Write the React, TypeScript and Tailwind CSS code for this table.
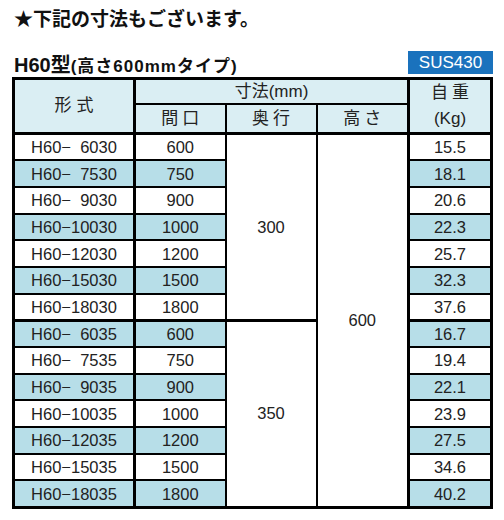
const FONT = '"Liberation Sans", "Noto Sans CJK JP", sans-serif';

type Row = { model: string; width: string; weight: string };

const ROWS: Row[] = [
  { model: 'H60−\u20076030', width: '600', weight: '15.5' },
  { model: 'H60−\u20077530', width: '750', weight: '18.1' },
  { model: 'H60−\u20079030', width: '900', weight: '20.6' },
  { model: 'H60−10030', width: '1000', weight: '22.3' },
  { model: 'H60−12030', width: '1200', weight: '25.7' },
  { model: 'H60−15030', width: '1500', weight: '32.3' },
  { model: 'H60−18030', width: '1800', weight: '37.6' },
  { model: 'H60−\u20076035', width: '600', weight: '16.7' },
  { model: 'H60−\u20077535', width: '750', weight: '19.4' },
  { model: 'H60−\u20079035', width: '900', weight: '22.1' },
  { model: 'H60−10035', width: '1000', weight: '23.9' },
  { model: 'H60−12035', width: '1200', weight: '27.5' },
  { model: 'H60−15035', width: '1500', weight: '34.6' },
  { model: 'H60−18035', width: '1800', weight: '40.2' },
];

export default function App() {
  return (
    <div className="w-[504px] h-[520px] bg-white text-[#1a1a1a]" style={{ fontFamily: FONT }}>
      <div className="pl-[14px] pt-[7px] h-[44px] text-[19px] font-bold leading-[26px] text-[#111]">
        ★下記の寸法もございます。
      </div>

      <div className="flex items-end h-[30px] pl-[14px] pr-[11px]">
        <div className="flex items-baseline font-bold text-[#111]">
          <span className="text-[20px] leading-[14px]">H60型</span>
          <span className="text-[17px] leading-[14px] tracking-[1px]">(高さ600mmタイプ)</span>
        </div>
        <div className="ml-auto w-[85px] h-[23px] bg-[#1a72bd] text-white text-[17px] leading-[23px] text-center">
          SUS430
        </div>
      </div>

      <table className="ml-[12px] mt-[3px] table-fixed border-collapse border-[3px] border-black text-[16.5px] text-[#222]">
        <colgroup>
          <col className="w-[121px]" />
          <col className="w-[91px]" />
          <col className="w-[91px]" />
          <col className="w-[92px]" />
          <col className="w-[83px]" />
        </colgroup>
        <thead>
          <tr className="h-[25px] bg-[#daeef3]">
            <th rowSpan={2} className="border-2 border-r-[3px] border-b-[3px] border-black font-normal text-[17px] tracking-[5px] pl-[5px]">
              形式
            </th>
            <th colSpan={3} className="border-2 border-black font-normal text-[17px] leading-[20px]">
              寸法(mm)
            </th>
            <th rowSpan={2} className="border-2 border-l-[3px] border-b-[3px] border-black font-normal text-[17px] leading-[26px]">
              <div className="tracking-[4px] pl-[4px]">自重</div>
              <div>(Kg)</div>
            </th>
          </tr>
          <tr className="h-[27px] bg-[#daeef3]">
            <th className="border-2 border-b-[3px] border-black font-normal text-[17px] tracking-[4px] pl-[4px]">間口</th>
            <th className="border-2 border-b-[3px] border-black font-normal text-[17px] tracking-[4px] pl-[4px]">奥行</th>
            <th className="border-2 border-b-[3px] border-black font-normal text-[17px] tracking-[4px] pl-[4px]">高さ</th>
          </tr>
        </thead>
        <tbody>
          {ROWS.map((row, i) => {
            const blue = i % 2 === 1;
            const bg = blue ? 'bg-[#b7dee8]' : 'bg-white';
            const groupEnd = i === 6;
            const bottom = groupEnd ? 'border-b-[3px]' : '';
            return (
              <tr key={row.model} className="h-[26.7px]">
                <td className={`border-2 border-r-[3px] border-black text-center leading-[20px] ${bg} ${bottom}`}>
                  {row.model}
                </td>
                <td className={`border-2 border-black text-center leading-[20px] ${bg} ${bottom}`}>{row.width}</td>
                {i === 0 && (
                  <td rowSpan={7} className="border-2 border-b-[3px] border-black text-center bg-white">
                    300
                  </td>
                )}
                {i === 7 && (
                  <td rowSpan={7} className="border-2 border-black text-center bg-white">
                    350
                  </td>
                )}
                {i === 0 && (
                  <td rowSpan={14} className="border-2 border-black text-center bg-white">
                    600
                  </td>
                )}
                <td className={`border-2 border-l-[3px] border-black text-center leading-[20px] ${bg} ${bottom}`}>
                  {row.weight}
                </td>
              </tr>
            );
          })}
        </tbody>
      </table>
    </div>
  );
}
